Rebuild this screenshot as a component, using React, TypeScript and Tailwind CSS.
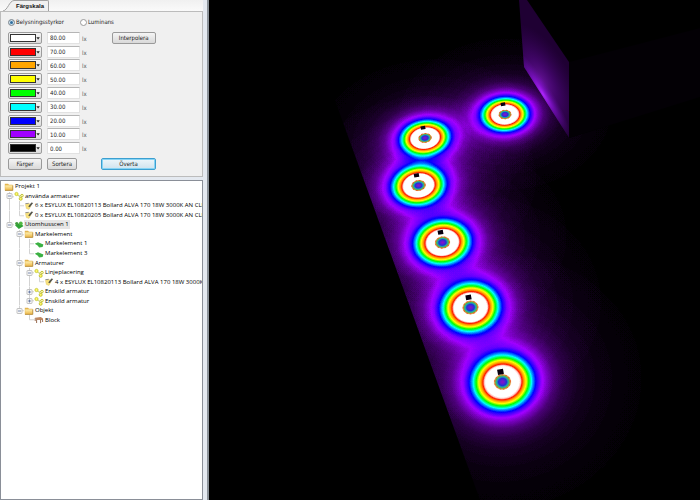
import { useState } from "react";

interface Level {
  color: string;
  name: string;
  value: string;
}

interface TreeRow {
  // one character per indent column: | line, T branch, L last branch, - expanded, + collapsed
  // E is an expanded last branch, P a collapsed last branch
  guides: string;
  icon: string;
  label: string;
  selected?: boolean;
}

interface Lamp {
  x: number;
  y: number;
  rx: number;
  ry: number;
  tilt: number;
}

const LEVELS: Level[] = [
  { color: "#ffffff", name: "Vit", value: "80.00" },
  { color: "#ff0000", name: "Röd", value: "70.00" },
  { color: "#ffa500", name: "Orange", value: "60.00" },
  { color: "#ffff00", name: "Gul", value: "50.00" },
  { color: "#00ff00", name: "Grön", value: "40.00" },
  { color: "#00ffff", name: "Cyan", value: "30.00" },
  { color: "#0000ff", name: "Blå", value: "20.00" },
  { color: "#a000ff", name: "Lila", value: "10.00" },
  { color: "#000000", name: "Svart", value: "0.00" },
];

const TREE: TreeRow[] = [
  { guides: "", icon: "folder", label: "Projekt 1" },
  { guides: "-", icon: "group", label: "använda armaturer" },
  { guides: "|T", icon: "lamp", label: "6 x ESYLUX EL10820113 Bollard ALVA 170 18W 3000K AN CLE" },
  { guides: "|L", icon: "lamp", label: "0 x ESYLUX EL10820205 Bollard ALVA 170 18W 3000K AN CLE" },
  { guides: "E", icon: "scene", label: "Utomhusscen 1", selected: true },
  { guides: " -", icon: "folder", label: "Markelement" },
  { guides: " |T", icon: "ground", label: "Markelement 1" },
  { guides: " |L", icon: "ground", label: "Markelement 3" },
  { guides: " -", icon: "folder", label: "Armaturer" },
  { guides: " |-", icon: "group", label: "Linjeplacering" },
  { guides: " ||L", icon: "lamp", label: "4 x ESYLUX EL10820113 Bollard ALVA 170 18W 3000K" },
  { guides: " |+", icon: "group", label: "Enskild armatur" },
  { guides: " |P", icon: "group", label: "Enskild armatur" },
  { guides: " E", icon: "folder", label: "Objekt" },
  { guides: "  L", icon: "block", label: "Block" },
];

const LAMPS: Lamp[] = [
  { x: 505, y: 114.5, rx: 25, ry: 18, tilt: -3 },
  { x: 425, y: 138, rx: 26, ry: 18.5, tilt: -8 },
  { x: 418.5, y: 185.5, rx: 28, ry: 21, tilt: -8 },
  { x: 442.5, y: 242.5, rx: 29.5, ry: 23.5, tilt: -8 },
  { x: 470.5, y: 307.5, rx: 31, ry: 26.5, tilt: -8 },
  { x: 502.5, y: 382, rx: 33, ry: 30, tilt: -8 },
];

// falloff of one lamp: distance (1 = the lamp's rx), illuminance in lx
const FALLOFF = [
  [0, 90],
  [0.5, 82],
  [0.55, 77],
  [0.6, 68],
  [0.66, 58],
  [0.73, 48],
  [0.81, 38],
  [0.91, 27],
  [1.04, 17.5],
  [1.18, 10.5],
  [1.34, 7.6],
  [1.55, 4.6],
  [1.85, 2.6],
  [2.3, 1.3],
  [3, 0.6],
  [4, 0.2],
  [5, 0],
];

function Guide({ kind }: { kind: string }) {
  if (kind === " ") return <span className="w-[10px] shrink-0" />;
  const last = kind === "L" || kind === "E" || kind === "P";
  const box = "-+EP".includes(kind);
  return (
    <span className="relative w-[10px] shrink-0 self-stretch">
      <svg viewBox="0 0 10 10" preserveAspectRatio="none" className="size-full" stroke="#d2d2d2" fill="none">
        <path d={last ? "M5.5 0V5" : "M5.5 0V10"} />
        {kind !== "|" && <path d="M5.5 5H10" />}
      </svg>
      {box && (
        <svg viewBox="0 0 10 10" className="absolute inset-0 m-auto size-[10px]" fill="none">
          <rect x="3" y="2.5" width="5" height="5" rx=".6" fill="#f8f8f8" stroke="#b4b4b4" strokeWidth=".8" />
          <path d={kind === "+" || kind === "P" ? "M4 5H7M5.5 3.5V6.5" : "M4 5H7"} stroke="#5b6f9c" strokeWidth=".8" />
        </svg>
      )}
    </span>
  );
}

function TreeIcon({ name }: { name: string }) {
  return (
    <svg viewBox="0 0 10 10" className="size-[10px] shrink-0" fill="none">
      {name === "folder" && (
        <>
          <path d="M.8 1.8H4L5 2.8H8.6V8.4H.8Z" fill="#e3b550" />
          <path d="M1.2 3.4H8.6V8H1.2Z" fill="url(#folderFace)" />
          <path d="M1 8.4H8.8V3.4" stroke="#a77a24" strokeWidth=".7" />
        </>
      )}
      {name === "group" && (
        <>
          <path d="M2.5 3.2L5 5L8 4.2M5 5L7.4 7.8" stroke="#b4bf4a" strokeWidth=".7" />
          <circle cx="2.5" cy="3" r="1.6" fill="#fff76a" stroke="#c2c428" strokeWidth=".8" />
          <circle cx="8" cy="4.6" r="1.3" fill="#fffbc0" stroke="#b6b81e" strokeWidth=".8" />
          <circle cx="6.7" cy="7.8" r="1.5" fill="#fff76a" stroke="#b6b81e" strokeWidth=".8" />
        </>
      )}
      {name === "lamp" && (
        <>
          <path d="M1.4 3.4L5 2.2L7 4.8L5 8.4L2.4 7.6Z" fill="#f8e27e" stroke="#dcc060" strokeWidth=".4" />
          <path d="M4.2 5.4L7.4 1.6L9.2 2L5.8 6.2Z" fill="#55554c" />
          <path d="M1.4 2.6L4.6 2.4" stroke="#888" strokeWidth=".9" />
        </>
      )}
      {name === "scene" && (
        <>
          <path d="M1 5.2L6 3.2L9.6 6L4.8 9Z" fill="#2fa336" />
          <circle cx="2.8" cy="3.6" r="1.7" fill="#3f9c3c" />
          <circle cx="6.8" cy="3.4" r="1.9" fill="#52b944" />
        </>
      )}
      {name === "ground" && <path d="M.8 4.8L4 3.2L9.4 5.4L8.6 8L5.2 8.4L3.6 6.6Z" fill="#3cb043" />}
      {name === "block" && (
        <>
          <path d="M1 2.8L6.8 2L9 3.6V5H2.4Z" fill="#c08a63" />
          <path d="M2.6 4.6V8M6.6 4.6V8.2M8.6 4.6V7M1.2 3.2V6" stroke="#9a6f54" strokeWidth="1" />
        </>
      )}
    </svg>
  );
}

function LevelRow({ level }: { level: Level }) {
  const [color, setColor] = useState(level.color);
  const [value, setValue] = useState(level.value);

  return (
    <div className="flex items-center">
      <div className="relative h-[12px] w-[34px] shrink-0 rounded-xs border border-[#9c9c9c] bg-linear-to-b from-[#f6f6f6] to-[#dcdcdc]">
        <select
          aria-label={`Färg ${level.value} lx`}
          value={color}
          onChange={(e) => setColor(e.target.value)}
          className="absolute inset-y-px left-px block w-[26px] appearance-none border border-[#333333]"
          style={{ backgroundColor: color }}
        >
          {LEVELS.map((l) => (
            <option key={l.color} value={l.color} aria-label={l.name} style={{ backgroundColor: l.color }} />
          ))}
        </select>
        <svg viewBox="0 0 4 3" className="pointer-events-none absolute top-[4px] right-px h-[3px] w-[4px]">
          <path d="M.4 .2H3.8L2.1 2.4Z" fill="#222" />
        </svg>
      </div>
      <input
        aria-label={`Nivå ${level.name}`}
        value={value}
        onChange={(e) => setValue(e.target.value)}
        className="ml-[5px] h-[12px] w-[33px] border border-[#e2e2e2] border-t-[#b5b5b5] bg-white px-[2px] text-[#222222] outline-none"
      />
      <span className="ml-[2px] pt-[2px] text-[#555555]">lx</span>
    </div>
  );
}

function ColorScale() {
  const [mode, setMode] = useState("lux");
  const button = "h-[12px] rounded-xs border border-[#9a9a9a] bg-linear-to-b from-[#f5f5f5] to-[#d9d9d9] text-center";
  const radio =
    "size-[7px] appearance-none rounded-full border border-[#9a9a9a] bg-white checked:bg-[#2f6f9f] checked:shadow-[inset_0_0_0_1px_#d4e6f2]";

  return (
    <section className="font-['DejaVu_Sans_Condensed','DejaVu_Sans',sans-serif] text-[6px] leading-[8px] text-[#222222]">
      <div className="flex h-[11px] items-end bg-linear-to-b from-[#f0f0f0] to-[#fafafa]">
        <svg viewBox="0 0 11 11" className="ml-[3px] h-[11px] w-[11px] shrink-0">
          <path d="M0 11C5 10 6 1 11 .5V11Z" fill="#f0f0f0" />
          <path d="M0 11C5 10 6 1 11 .5" fill="none" stroke="#a0a0a0" />
        </svg>
        <h2 className="flex h-[11px] items-center rounded-tr-xs border-t border-r border-[#a0a0a0] bg-[#f0f0f0] pr-[4px] pl-[2px] font-['Liberation_Sans',sans-serif] font-bold text-[#111111]">
          Färgskala
        </h2>
      </div>
      <div className="border border-[#bcbcbc] bg-[#f0f0f0] pt-[6px] pr-2 pb-[6px] pl-[7px]">
        <div className="flex items-center gap-[16px]">
          <label className="flex items-center gap-px">
            <input type="radio" name="mode" checked={mode === "lux"} onChange={() => setMode("lux")} className={radio} />
            Belysningsstyrkor
          </label>
          <label className="flex items-center gap-px">
            <input type="radio" name="mode" checked={mode === "lum"} onChange={() => setMode("lum")} className={radio} />
            Luminans
          </label>
        </div>
        <div className="mt-[5px] flex gap-[25px]">
          <div className="grid h-[124px] auto-rows-fr">
            {LEVELS.map((level) => (
              <LevelRow key={level.color} level={level} />
            ))}
          </div>
          <button type="button" className={`${button} mt-px w-[44px]`}>
            Interpolera
          </button>
        </div>
        <div className="mt-[3px] flex items-center">
          <button type="button" className={`${button} w-[34px]`}>
            Färger
          </button>
          <button type="button" className={`${button} ml-[5px] w-[30px]`}>
            Sortera
          </button>
          <button
            type="button"
            className="ml-[24px] h-[12px] w-[55px] rounded-xs border border-[#3c9fd0] bg-linear-to-b from-[#eef6fa] to-[#cfe3ee] text-center shadow-[inset_0_0_0_1px_#86d4f5]"
          >
            Överta
          </button>
        </div>
      </div>
    </section>
  );
}

function ProjectTree() {
  return (
    <nav className="mt-[3px] flex-1 overflow-hidden border border-[#8a8f98] bg-white pt-px pl-[3px] font-['Open_Sans','Noto_Sans',sans-serif] text-[6px] leading-[9px] text-[#000000]">
      <ul className="grid h-[143px] auto-rows-fr">
        {TREE.map((row, i) => (
          <li key={i} className="flex min-w-0 items-center whitespace-nowrap">
            {row.guides.split("").map((kind, col) => (
              <Guide key={col} kind={kind} />
            ))}
            <TreeIcon name={row.icon} />
            <span className={row.selected ? "bg-[#e6e6e6] px-px" : "ml-px"}>{row.label}</span>
          </li>
        ))}
      </ul>
    </nav>
  );
}

function Hub({ lamp }: { lamp: Lamp }) {
  const rx = lamp.rx * 0.27;
  const ry = lamp.ry * 0.27;
  return (
    <>
      <g transform={`translate(${lamp.x} ${lamp.y}) rotate(${lamp.tilt})`}>
        <ellipse rx={rx} ry={ry} fill="url(#hub)" />
        <ellipse rx={rx * 0.87} ry={ry * 0.87} fill="none" stroke="#e8552a" strokeWidth="1" strokeDasharray="1.5 2" />
      </g>
      <rect
        x={-lamp.rx * 0.09}
        y={-lamp.ry * 0.09}
        width={lamp.rx * 0.18}
        height={lamp.ry * 0.18}
        transform={`translate(${lamp.x - 2} ${lamp.y - 10.2}) rotate(-10)`}
        fill="#08000f"
      />
    </>
  );
}

function FalseColorView() {
  return (
    <svg
      viewBox="209 0 491 500"
      preserveAspectRatio="xMinYMin slice"
      className="size-full"
      role="img"
      aria-label="Utomhusscen 1"
    >
      <defs>
        <radialGradient id="lux">
          {FALLOFF.map(([r, lx]) => (
            <stop key={r} offset={r / 5} stopColor="#fff" stopOpacity={Math.min(1, lx / 80)} />
          ))}
        </radialGradient>
        <radialGradient id="hub">
          <stop offset="0" stopColor="#8a10c8" />
          <stop offset=".25" stopColor="#5a20d0" />
          <stop offset=".45" stopColor="#2030d8" />
          <stop offset=".62" stopColor="#20a0b0" />
          <stop offset=".76" stopColor="#50b850" />
          <stop offset=".88" stopColor="#d8a040" />
          <stop offset="1" stopColor="#ffe8d8" />
        </radialGradient>
        <radialGradient id="spot">
          <stop offset="0" stopColor="#b026ff" />
          <stop offset=".4" stopColor="#8a12dc" stopOpacity=".6" />
          <stop offset="1" stopColor="#5a0a94" stopOpacity="0" />
        </radialGradient>
        <clipPath id="ground">
          <path d="M480 500L321 62L519 4L524 67L569 138L700 97V500Z" />
        </clipPath>
        <clipPath id="face">
          <path d="M519 0H527L569 62V138L524 67Z" />
        </clipPath>
        {/* illuminance to colour, one table entry for each 10 lx */}
        <filter id="scale" x="209" y="0" width="491" height="500" filterUnits="userSpaceOnUse" colorInterpolationFilters="sRGB">
          <feComponentTransfer>
            <feFuncR type="table" tableValues="0 .63 0 0 0 1 1 1 1" />
            <feFuncG type="table" tableValues="0 0 0 1 1 1 .62 .1 1" />
            <feFuncB type="table" tableValues="0 1 1 1 0 0 0 0 1" />
          </feComponentTransfer>
        </filter>
        <linearGradient id="folderFace" x2="0" y2="1">
          <stop stopColor="#fff0b0" />
          <stop offset="1" stopColor="#ecb84c" />
        </linearGradient>
      </defs>
      <rect x="209" width="491" height="500" fill="#000" />
      <g clipPath="url(#ground)">
        <g filter="url(#scale)">
          <rect x="209" width="491" height="500" fill="#000" />
          {LAMPS.map((lamp) => (
            <ellipse
              key={lamp.y}
              rx={lamp.rx * 5}
              ry={lamp.ry * 5}
              transform={`translate(${lamp.x} ${lamp.y}) rotate(${lamp.tilt})`}
              fill="url(#lux)"
              className="mix-blend-plus-lighter"
            />
          ))}
        </g>
        {LAMPS.map((lamp) => (
          <Hub key={lamp.y} lamp={lamp} />
        ))}
      </g>
      <path d="M569 62L700 28V97L569 138Z" fill="#030005" />
      <g clipPath="url(#face)">
        <rect x="515" width="60" height="140" fill="#1f0033" />
        <ellipse rx="64" ry="30" transform="translate(541 82) rotate(62)" fill="url(#spot)" opacity=".5" />
        <ellipse rx="50" ry="9" transform="translate(543 94) rotate(58)" fill="url(#spot)" />
      </g>
    </svg>
  );
}

export default function App() {
  return (
    <div className="flex h-screen overflow-hidden bg-[#f0f0f0]">
      <aside className="flex w-[209px] shrink-0 flex-col border-r-2 border-[#8b9299] bg-[#e4e9f0] pr-[4px]">
        <ColorScale />
        <ProjectTree />
      </aside>
      <main className="min-w-0 flex-1 bg-black">
        <FalseColorView />
      </main>
    </div>
  );
}
